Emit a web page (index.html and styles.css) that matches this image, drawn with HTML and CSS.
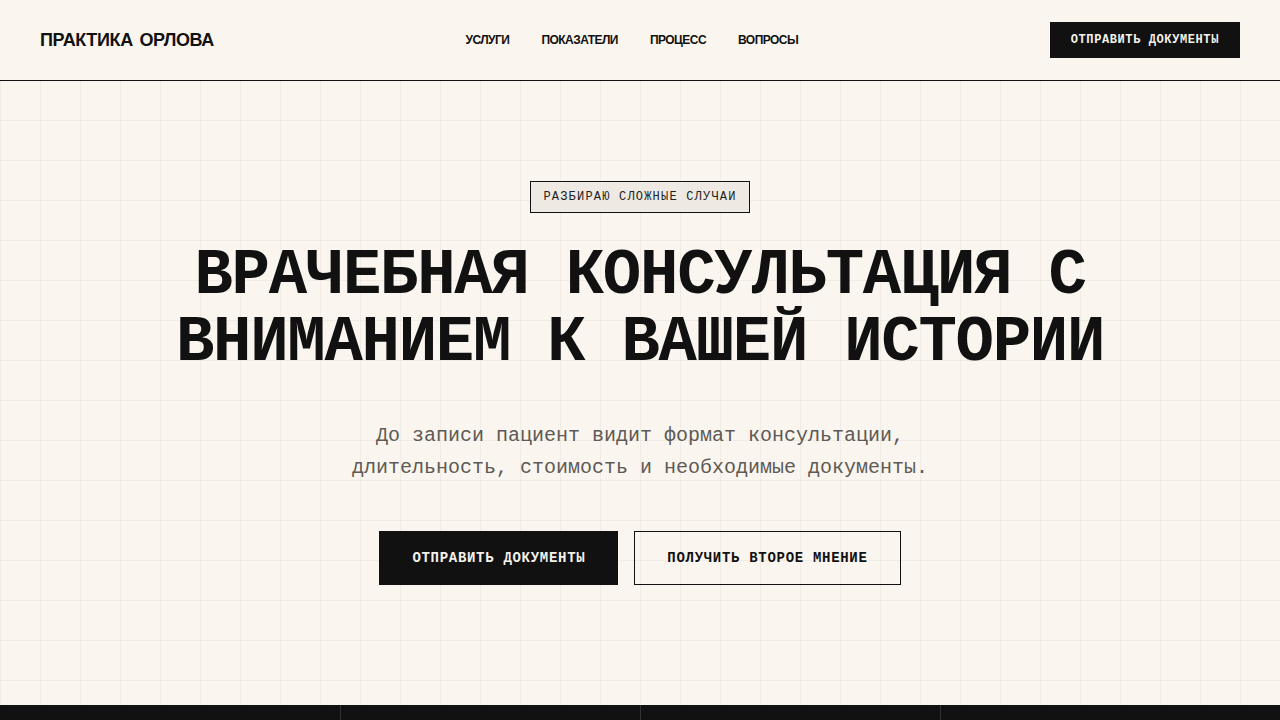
FILE: index.html
```html
<!DOCTYPE html>
<html lang="ru">
<head>
<meta charset="utf-8">
<title>Практика Орлова</title>
<link rel="stylesheet" href="styles.css">
</head>
<body>
<header class="header">
  <a class="logo" href="#">ПРАКТИКА ОРЛОВА</a>
  <nav class="nav">
    <a href="#">УСЛУГИ</a>
    <a href="#">ПОКАЗАТЕЛИ</a>
    <a href="#">ПРОЦЕСС</a>
    <a href="#">ВОПРОСЫ</a>
  </nav>
  <a class="btn btn-dark btn-small" href="#">ОТПРАВИТЬ ДОКУМЕНТЫ</a>
</header>
<main>
  <section class="hero">
    <span class="badge">РАЗБИРАЮ СЛОЖНЫЕ СЛУЧАИ</span>
    <h1 class="title">ВРАЧЕБНАЯ КОНСУЛЬТАЦИЯ С<br>ВНИМАНИЕМ К ВАШЕЙ ИСТОРИИ</h1>
    <p class="lead">До записи пациент видит формат консультации,<br>длительность, стоимость и необходимые документы.</p>
    <div class="actions">
      <a class="btn btn-dark" href="#">ОТПРАВИТЬ ДОКУМЕНТЫ</a>
      <a class="btn btn-outline" href="#">ПОЛУЧИТЬ ВТОРОЕ МНЕНИЕ</a>
    </div>
  </section>
  <section class="stats">
    <div class="stats-inner">
      <div class="stat"><div class="stat-num">18</div><div class="stat-label">лет практики</div></div>
      <div class="stat"><div class="stat-num">2400+</div><div class="stat-label">консультаций</div></div>
      <div class="stat"><div class="stat-num">48 ч</div><div class="stat-label">разбор документов</div></div>
      <div class="stat"><div class="stat-num">60 мин</div><div class="stat-label">длительность приёма</div></div>
    </div>
  </section>
</main>
</body>
</html>
```
FILE: styles.css
```css
* { box-sizing: border-box; }
html, body { margin: 0; padding: 0; }
body {
  background-color: #faf6ef;
  background-image:
    linear-gradient(to right, rgba(60, 40, 20, 0.05) 1px, transparent 1px),
    linear-gradient(to bottom, rgba(60, 40, 20, 0.05) 1px, transparent 1px);
  background-size: 40px 40px;
  color: #111;
  font-family: "Liberation Mono", "Courier New", monospace;
}
a { color: inherit; text-decoration: none; }

.header {
  height: 81px;
  padding: 0 40px;
  display: flex;
  align-items: center;
  justify-content: space-between;
  background: #faf6ef;
  border-bottom: 1px solid #111;
}
.logo {
  font-family: "Liberation Sans", Arial, sans-serif;
  font-weight: 700;
  font-size: 18px;
  letter-spacing: -0.02em;
  word-spacing: 2px;
}
.nav {
  display: flex;
  gap: 32px;
  font-family: "Liberation Sans", Arial, sans-serif;
  font-weight: 700;
  font-size: 12px;
  letter-spacing: -0.045em;
}

.btn {
  display: inline-flex;
  align-items: center;
  justify-content: center;
  font-family: "Liberation Mono", "Courier New", monospace;
  font-weight: 700;
  font-size: 14px;
  letter-spacing: 0.05em;
  height: 54px;
  padding: 0 32px;
  border: 1px solid #111;
}
.btn-dark { background: #111; color: #f5f1ea; }
.btn-outline { background: transparent; color: #111; }
.btn-small { font-size: 12px; height: 36px; padding: 0 20px; }

.hero {
  display: flex;
  flex-direction: column;
  align-items: center;
  text-align: center;
  padding: 100px 40px 120px;
}
.badge {
  font-size: 12px;
  letter-spacing: 0.1em;
  padding: 8px 12px;
  line-height: 14px;
  border: 1px solid #111;
  background: #eeeae3;
  color: #222;
}
.title {
  margin: 30px 0 0;
  font-size: 64px;
  line-height: 1.04;
  letter-spacing: -0.02em;
  font-weight: 700;
}
.lead {
  margin: 44px 0 0;
  font-size: 20px;
  line-height: 1.6;
  color: #5e5a55;
}
.actions {
  display: flex;
  gap: 16px;
  margin-top: 47px;
}

.stats { background: #111; color: #f5f1ea; }
.stats-inner {
  max-width: 1200px;
  margin: 0 auto;
  display: grid;
  grid-template-columns: repeat(4, 1fr);
}
.stat {
  padding: 48px 32px;
  border-left: 1px solid #333;
}
.stat:first-child { border-left: none; }
.stat-num { font-size: 40px; font-weight: 700; }
.stat-label { margin-top: 8px; font-size: 14px; color: #aaa; }
```
